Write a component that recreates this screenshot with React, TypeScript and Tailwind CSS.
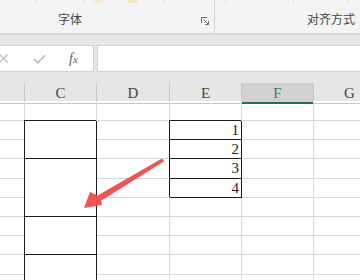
import React from 'react';

const cols = 'grid grid-cols-[25px_72px_73px_72px_72px_1fr]';
const rowHeights = 'grid-rows-[20px_19px_19px_20px_19px_19px_19px_19px_20px_19px]';
const rowStart = [
  'row-start-1',
  'row-start-2',
  'row-start-3',
  'row-start-4',
  'row-start-5',
  'row-start-6',
  'row-start-7',
  'row-start-8',
  'row-start-9',
  'row-start-10',
];

// Red callout arrow drawn over the sheet
const Arrow: React.FC = () => (
  <svg className="pointer-events-none absolute left-0 top-0" width="360" height="280" viewBox="0 0 360 280">
    <polygon
      points="162,158.6 164.2,161.2 101,200.8 102,205 84,208 90,192 97.6,195.6"
      fill="#f04b4b"
      fillOpacity="0.95"
    />
  </svg>
);

const Launcher: React.FC = () => (
  <svg width="8" height="8" viewBox="0 0 8 8" fill="none" stroke="#6b6b6b" strokeWidth="1">
    <path d="M0.5 6V0.5H6" />
    <path d="M2.5 2.5L7 7" />
    <path d="M7.5 4V7.5H4" />
  </svg>
);

const Cell: React.FC<{ box?: boolean; className?: string; children?: React.ReactNode }> = ({ box = false, className = '', children }) => (
  <div
    className={`${
      box
        ? 'relative border-r border-b border-[#1c1c1c] shadow-[-1px_-1px_0_0_#1c1c1c]'
        : 'border-r border-b border-[#d9d9d9]'
    } ${className}`}
  >
    {children}
  </div>
);

const App: React.FC = () => {
  const cBoxes = [
    'row-start-2 row-span-2',
    'row-start-4 row-span-3',
    'row-start-7 row-span-2',
    'row-start-9 row-span-2',
  ];

  return (
    <div className="relative w-[360px] h-[280px] overflow-hidden bg-white font-['Noto_Sans_CJK_SC',sans-serif]">
      {/* ribbon */}
      <div className="flex h-[33px] bg-[#f3f3f3] text-[12px] text-[#444]">
        <div className="flex w-[215px] flex-col border-r border-[#d6d6d6]">
          <div className="flex h-[3px]">
            <div className="w-[37px] border-r border-[#e0e0e0]" />
            <div className="w-[47px] border-r border-[#e0e0e0]" />
            <div className="w-[9px]" />
            <div className="w-[9px] bg-[#f7ead0]" />
            <div className="w-[26px]" />
            <div className="w-[10px] bg-[#f7e6c4]" />
            <div className="w-[27px] border-r border-[#e0e0e0]" />
          </div>
          <div className="flex flex-1 items-center pl-[58px] pr-[5px] pt-[1px]">
            <span className="leading-none">字体</span>
            <div className="ml-auto mt-[4px]">
              <Launcher />
            </div>
          </div>
        </div>
        <div className="flex flex-1 flex-col">
          <div className="flex h-[3px]">
            <div className="w-[11px] border-r border-[#e0e0e0]" />
            <div className="w-[68px] border-r border-[#e0e0e0]" />
            <div className="w-[54px] border-r border-[#e0e0e0]" />
          </div>
          <div className="flex flex-1 items-center justify-end pr-[5px] pt-[1px]">
            <span className="leading-none">对齐方式</span>
          </div>
        </div>
      </div>
      <div className="h-[3px] bg-gradient-to-b from-[#d2d2d2] to-[#e4e4e4]" />

      {/* formula bar */}
      <div className="flex h-[47px] flex-col bg-[#e6e6e6] pt-[9px]">
        <div className="flex h-[27px] gap-[3px]">
          <div className="flex w-[94px] items-center border border-l-0 border-[#d2d2d2] bg-white">
            <svg width="9" height="9" viewBox="0 0 9 9" className="-ml-[1px]" stroke="#b8b8b8" strokeWidth="1.1">
              <path d="M0.5 0.5L8.5 8.5M8.5 0.5L0.5 8.5" />
            </svg>
            <svg width="13" height="10" viewBox="0 0 13 10" className="ml-[25px]" fill="none" stroke="#b8b8b8" strokeWidth="1.5">
              <path d="M1 5L4.8 8.8L12 1.2" />
            </svg>
            <span className="ml-[23px] font-['Liberation_Serif',serif] text-[14px] italic leading-none text-[#5a5a5a]">
              f<span className="text-[11px]">x</span>
            </span>
          </div>
          <div className="flex-1 border border-r-0 border-[#d2d2d2] bg-white" />
        </div>
      </div>

      {/* column headers */}
      <div className={`${cols} h-[18px] bg-[#e6e6e6] font-['Liberation_Serif',serif] text-[15px] leading-[18px] text-[#444]`}>
        <div className="border-r border-b border-[#c8c8c8]" />
        <div className="border-r border-b border-[#c8c8c8] pt-[1px] text-center">C</div>
        <div className="border-r border-b border-[#c8c8c8] pt-[1px] text-center">D</div>
        <div className="border-r border-b border-[#c8c8c8] pt-[1px] text-center">E</div>
        <div className="border-r border-b-2 border-r-[#c8c8c8] border-b-[#217346] bg-[#d2d2d2] pt-[1px] text-center text-[#4b7a5e]">
          F
        </div>
        <div className="border-b border-[#c8c8c8] pt-[1px] pl-[30px]">G</div>
      </div>

      {/* sheet body */}
      <div className={`${cols} ${rowHeights} font-['Liberation_Serif',serif] text-[15px] leading-[19px] text-[#222]`}>
        {rowStart.map((r, i) => (
          <React.Fragment key={r}>
            <Cell className={`col-start-1 ${r}`} />
            <Cell className={`col-start-3 ${r}`} />
            {(i === 0 || i > 4) && <Cell className={`col-start-4 ${r}`} />}
            <Cell className={`col-start-5 ${r}`} />
            <div className={`col-start-6 ${r} border-b border-[#d9d9d9]`} />
          </React.Fragment>
        ))}
        <Cell className="col-start-2 row-start-1" />
        {cBoxes.map((c, i) => (
          <Cell key={`c${i}`} box className={`col-start-2 ${c}`} />
        ))}
        {[1, 2, 3, 4].map((n) => (
          <Cell key={`e${n}`} box className={`col-start-4 ${rowStart[n]} pr-[2px] text-right`}>
            {n}
          </Cell>
        ))}
      </div>

      <Arrow />
    </div>
  );
};

export default App;
